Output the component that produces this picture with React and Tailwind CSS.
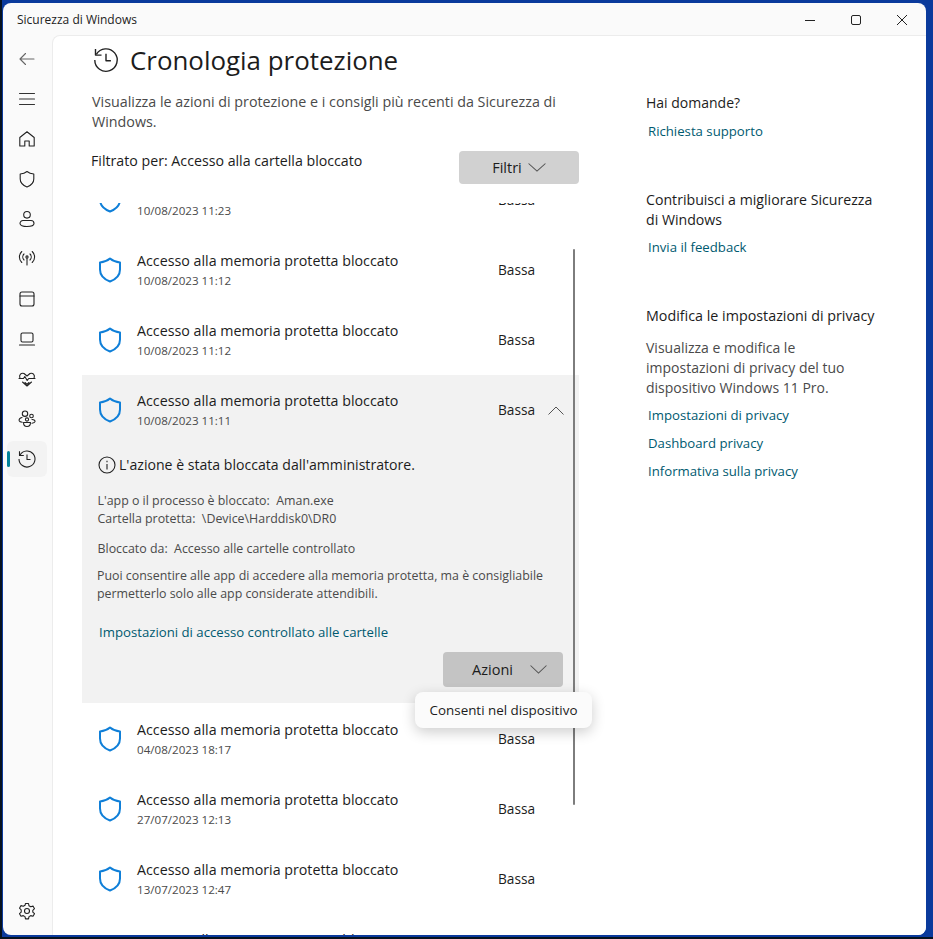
import React from "react";

const Shield = ({ className = "" }) => (
  <svg width="24" height="26" viewBox="0 0 24 26" fill="none" stroke="#0f7fd8" strokeWidth="2" className={className}>
    <path d="M12 1.5c2.6 2.2 6 3.6 10 3.900v7.100c0 5.400-3.600 9.600-10 12-6.400-2.400-10-6.600-10-12V5.400c4-.3 7.400-1.700 10-3.900z" strokeLinejoin="round" />
  </svg>
);

const Chevron = ({ up = false, w = 16 }) => (
  <svg width={w} height="9" viewBox="0 0 16 9" preserveAspectRatio="none" fill="none" stroke="#555" strokeWidth="1">
    <path d={up ? "M.5 8.500 8 1l7.500 7.500" : "M.5.5 8 8 15.500.5"} />
  </svg>
);

const I = ({ children, size = 20 }) => (
  <svg width={size} height={size} viewBox="0 0 20 20" fill="none" stroke="#222" strokeWidth="1.100" strokeLinecap="round" strokeLinejoin="round">
    {children}
  </svg>
);

const History = ({ size = 20, sw = 1.1 }) => (
  <svg width={size} height={size} viewBox="0 0 20 20" fill="none" stroke="#222" strokeWidth={sw} strokeLinejoin="round">
    <path d="M3.100 6A8 8 0 1 1 2 10" />
    <path d="M2.500 2.200v4.300h4.300" />
    <path d="M10 5.500v5h3.500" />
  </svg>
);

const nav = [
  <I><path d="M17 10H3.200M8.500 4.500 3 10l5.500 5.500" stroke="#666" /></I>,
  <I><path d="M2.500 4.500h15M2.500 10h15M2.500 15.500h15" stroke="#333" /></I>,
  <I><path d="M2.800 8.500 10 2.800l7.200 5.700V17h-5v-5H7.800v5h-5z" /></I>,
  <I><path d="M10 2.500c2 1.600 4.300 2.300 6.800 2.500v5c0 3.700-2.400 6.200-6.800 8-4.400-1.800-6.800-4.300-6.800-8V5c2.500-.2 4.800-.9 6.800-2.500z" /></I>,
  <I><circle cx="10" cy="5.800" r="3.300" /><path d="M6 11.500h8a3 3 0 0 1 3 3c0 1.800-3 3-7 3s-7-1.200-7-3a3 3 0 0 1 3-3z" /></I>,
  <I><circle cx="10" cy="8" r="1.100" /><path d="M10 9.500V16M7 11a4.300 4.300 0 0 1 0-6M13 5a4.300 4.300 0 0 1 0 6M4.800 13.500a7.500 7.500 0 0 1 0-11M15.200 2.500a7.500 7.500 0 0 1 0 11" /></I>,
  <I><rect x="3" y="3" width="14" height="14" rx="2" /><path d="M3 7h14" /></I>,
  <I><rect x="4" y="4" width="12" height="9" rx="1.500" /><path d="M2.500 16h15" /></I>,
  <I><path d="M2.900 9C1.700 5.900 4.300 3.500 7 4.500L10 7l3-2.500c2.700-1 5.300 1.400 4.100 4.500" /><path d="M2 9.500h4.500l1.300-2 2.400 4 1.500-2H18" /><path d="M5.500 13 10 17l4.500-4M8 13.500l2 1.800 2-1.800" /></I>,
  <I><circle cx="8" cy="4.700" r="2.700" /><circle cx="14.500" cy="7" r="1.800" /><circle cx="10" cy="10.500" r="1.600" /><path d="M5 8.500c-2.500.5-3.200 2-2.800 3.200.4 1 1.700 1.400 3 1.600M15 10.500c2.300.2 3.300 1 3 2.200-.3 1-1.500 1.400-3 1.500M6.500 13.500h7c0 2.500-1.500 4-3.500 4s-3.500-1.500-3.500-4z" /></I>,
];

const font = "font-['Open_Sans','Noto_Sans',sans-serif]";

const Row = ({ date, level = "Bassa", chevron = false }) => (
  <div className="flex h-[70px] shrink-0 items-center pl-4 pr-[15px]">
    <Shield className="shrink-0" />
    <div className="ml-[15px] flex w-[361px] flex-col pt-[2px]">
      <div className="whitespace-nowrap text-[14.25px] leading-5 text-[#1c1c1c]">Accesso alla memoria protetta bloccato</div>
      <div className="h-5 text-[11.6px] leading-5 text-[#4a4a4a]">{date}</div>
    </div>
    <div className="text-[13.7px] text-[#1c1c1c]">{level}</div>
    {chevron && <div className="ml-auto"><Chevron up /></div>}
  </div>
);

const Link = ({ children, className = "" }) => (
  <div className={`text-[13.2px] leading-5 text-[#005a70] ${className}`}>{children}</div>
);

export default function App() {
  return (
    <div className={`h-[939px] w-[933px] overflow-hidden bg-[#06121f] pl-[2px] ${font}`}>
      <div className="h-[937px] w-[931px] bg-[#0a3a9c] pl-[1px] pr-[7px] pt-[3px] pb-[2px]">
        <div className="flex h-full w-full flex-col overflow-hidden rounded-lg bg-[#fafafa]">
          {/* title bar */}
          <div className="flex h-[32px] shrink-0 items-center pt-[2px]">
            <span className="ml-[14px] text-xs text-[#222]">Sicurezza di Windows</span>
            <div className="ml-auto flex items-center gap-[36px] pr-[19px]">
              <svg width="10" height="10" viewBox="0 0 10 10" stroke="#222"><path d="M0 5.500h10" /></svg>
              <svg width="10" height="10" viewBox="0 0 10 10" fill="none" stroke="#222"><rect x=".5" y=".5" width="9" height="9" rx="1.500" /></svg>
              <svg width="10" height="10" viewBox="0 0 10 10" stroke="#222"><path d="M0 0l10 10M10 0 0 10" /></svg>
            </div>
          </div>
          <div className="flex min-h-0 flex-1">
            {/* sidebar */}
            <div className="flex w-[49px] shrink-0 flex-col items-center pb-[14px] pr-[2px] pt-[14px]">
              <div className="flex flex-col items-center gap-[20px]">
                {nav.map((n, i) => <div key={i} className="flex h-5 w-5 items-center justify-center">{n}</div>)}
              </div>
              <div className="relative mt-[12px] flex h-9 w-10 items-center justify-center rounded-md bg-[#f3f3f3]">
                <div className="absolute left-0 top-[10px] h-4 w-[3px] rounded bg-[#00829b]" />
                <History />
              </div>
              <div className="mt-auto">
                <I>
                  <circle cx="10" cy="10" r="2.500" />
                  <path d="M8.500 2.500h3l.5 2.300 1.700 1 2.300-.7 1.500 2.600-1.700 1.600v1.800l1.700 1.600-1.500 2.600-2.300-.7-1.700 1-.5 2.300h-3l-.5-2.300-1.700-1-2.300.7-1.500-2.600 1.700-1.600V8.800L2.500 7.200 4 4.600l2.300.7 1.700-1z" />
                </I>
              </div>
            </div>
            {/* content */}
            <div className="relative flex min-w-0 flex-1 overflow-hidden rounded-tl-lg border-l border-t border-[#ececec] bg-white">
              <div className="flex w-[537px] shrink-0 flex-col">
                <div className="flex h-[48px] shrink-0 items-center pl-[39px]">
                  <History size={28} sw={1} />
                  <h1 className="ml-[10px] text-[25.9px] font-normal text-[#1c1c1c]">Cronologia protezione</h1>
                </div>
                <p className="ml-[39px] mt-[8px] w-[490px] text-[14.3px] leading-5 text-[#4a4a4a]">
                  Visualizza le azioni di protezione e i consigli più recenti da Sicurezza di Windows.
                </p>
                <div className="mt-[19px] flex h-[33px] shrink-0 items-start justify-between pl-[38px] pr-[11px]">
                  <span className="text-[14.2px] leading-5 text-[#1c1c1c]">Filtrato per: Accesso alla cartella bloccato</span>
                  <button className="flex h-[33px] w-[120px] items-center justify-center gap-[6px] rounded bg-[#d1d1d1] text-[14.5px] text-[#1c1c1c]">
                    Filtri <Chevron w={18} />
                  </button>
                </div>
                {/* list */}
                <div className="relative mt-[19px] min-h-0 flex-1 overflow-hidden pl-[29px]">
                  <div className="-mt-[38px] flex w-[497px] flex-col">
                    <Row date="10/08/2023 11:23" />
                    <Row date="10/08/2023 11:12" />
                    <Row date="10/08/2023 11:12" />
                    <div className="mb-[1px] flex h-[328px] shrink-0 flex-col bg-[#f2f2f2]">
                      <Row date="10/08/2023 11:11" chevron />
                      <div className="flex flex-1 flex-col pl-[15px] pr-[16px]">
                        <div className="ml-[1px] mt-[9px] flex items-center gap-[3px] text-[14.1px] text-[#1c1c1c]">
                          <svg width="18" height="18" viewBox="0 0 18 18" fill="none" stroke="#222" strokeWidth="1.100"><circle cx="9" cy="9" r="8" /><path d="M9 8v5.500M9 4.800v1.400" /></svg>
                          <span>L'azione è stata bloccata dall'amministratore.</span>
                        </div>
                        <div className="ml-[0.5px] mt-[17px] text-[12.4px] leading-[18px] text-[#4a4a4a]">
                          <div>L'app o il processo è bloccato:&nbsp; Aman.exe</div>
                          <div>Cartella protetta:&nbsp; \Device\Harddisk0\DR0</div>
                        </div>
                        <div className="ml-[0.5px] mt-3 text-[12.4px] leading-[18px] text-[#4a4a4a]">Bloccato da:&nbsp; Accesso alle cartelle controllato</div>
                        <div className="mt-[9px] text-[12.4px] leading-[18px] text-[#4a4a4a]">
                          Puoi consentire alle app di accedere alla memoria protetta, ma è consigliabile<br />permetterlo solo alle app considerate attendibili.
                        </div>
                        <Link className="ml-[2px] mt-[19px]">Impostazioni di accesso controllato alle cartelle</Link>
                        <button className="ml-auto mt-[10px] flex h-[35px] w-[120px] items-center justify-center gap-[17px] rounded bg-[#c4c4c4] pl-[13px] text-[14.5px] text-[#1c1c1c]">
                          Azioni <Chevron w={17} />
                        </button>
                      </div>
                    </div>
                    <Row date="04/08/2023 18:17" />
                    <Row date="27/07/2023 12:13" />
                    <Row date="13/07/2023 12:47" />
                    <Row date="" />
                  </div>
                </div>
              </div>
              {/* right column */}
              <div className="flex flex-1 flex-col pl-[56px] pr-3 pt-[57px]">
                <div className="text-sm leading-5 text-[#1c1c1c]">Hai domande?</div>
                <Link className="ml-[2px] mt-2">Richiesta supporto</Link>
                <div className="mt-[49px] w-[232px] text-[14.15px] leading-5 text-[#1c1c1c]">Contribuisci a migliorare Sicurezza di Windows</div>
                <Link className="ml-[2px] mt-[7px]">Invia il feedback</Link>
                <div className="mt-[49px] whitespace-nowrap text-[14.3px] leading-5 text-[#1c1c1c]">Modifica le impostazioni di privacy</div>
                <div className="mt-[12px] w-[220px] text-sm leading-5 text-[#4a4a4a]">Visualizza e modifica le impostazioni di privacy del tuo dispositivo Windows 11 Pro.</div>
                <Link className="ml-[2px] mt-[7px]">Impostazioni di privacy</Link>
                <Link className="ml-[2px] mt-2">Dashboard privacy</Link>
                <Link className="ml-[2px] mt-2">Informativa sulla privacy</Link>
              </div>
              {/* scrollbar */}
              <div className="absolute left-[520px] top-[213px] h-[556px] w-[2px] rounded bg-[#7d7d7d]" />
              {/* menu */}
              <div className="absolute left-[362px] top-[656px] flex h-[36px] w-[177px] items-center justify-center rounded-lg bg-[#fbfbfb] text-[13.4px] text-[#1c1c1c] shadow-[0_4px_14px_rgba(0,0,0,0.2)]">
                Consenti nel dispositivo
              </div>
            </div>
          </div>
        </div>
      </div>
    </div>
  );
}
